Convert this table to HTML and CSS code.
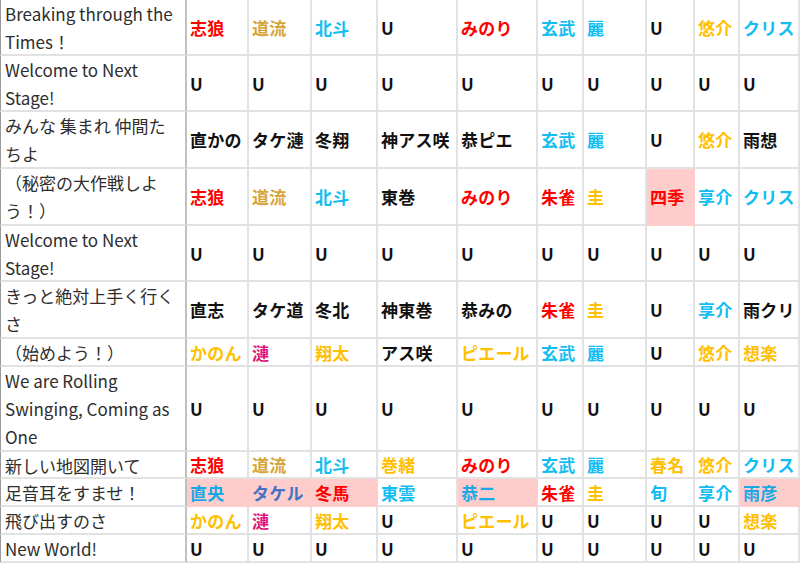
FILE: index.html
```html
<!DOCTYPE html>
<html lang="ja">
<head>
<meta charset="utf-8">
<title>Breaking through the Times</title>
<link rel="stylesheet" href="styles.css">
</head>
<body>
<div class="sheet">
  <div class="c lyric">Breaking through the Times！</div>
  <div class="c n red">志狼</div><div class="c n gr">道流</div><div class="c n cy">北斗</div><div class="c n">U</div><div class="c n red">みのり</div><div class="c n cy">玄武</div><div class="c n cy">麗</div><div class="c n">U</div><div class="c n gd">悠介</div><div class="c n cy">クリス</div>

  <div class="c lyric">Welcome to Next Stage!</div>
  <div class="c n">U</div><div class="c n">U</div><div class="c n">U</div><div class="c n">U</div><div class="c n">U</div><div class="c n">U</div><div class="c n">U</div><div class="c n">U</div><div class="c n">U</div><div class="c n">U</div>

  <div class="c lyric">みんな 集まれ 仲間たちよ</div>
  <div class="c n">直かの</div><div class="c n">タケ漣</div><div class="c n">冬翔</div><div class="c n">神アス咲</div><div class="c n">恭ピエ</div><div class="c n cy">玄武</div><div class="c n cy">麗</div><div class="c n">U</div><div class="c n gd">悠介</div><div class="c n">雨想</div>

  <div class="c lyric">（秘密の大作戦しよう！）</div>
  <div class="c n red">志狼</div><div class="c n gr">道流</div><div class="c n cy">北斗</div><div class="c n">東巻</div><div class="c n red">みのり</div><div class="c n red">朱雀</div><div class="c n gd">圭</div><div class="c n red pink">四季</div><div class="c n cy">享介</div><div class="c n cy">クリス</div>

  <div class="c lyric">Welcome to Next Stage!</div>
  <div class="c n">U</div><div class="c n">U</div><div class="c n">U</div><div class="c n">U</div><div class="c n">U</div><div class="c n">U</div><div class="c n">U</div><div class="c n">U</div><div class="c n">U</div><div class="c n">U</div>

  <div class="c lyric">きっと絶対上手く行くさ</div>
  <div class="c n">直志</div><div class="c n">タケ道</div><div class="c n">冬北</div><div class="c n">神東巻</div><div class="c n">恭みの</div><div class="c n red">朱雀</div><div class="c n gd">圭</div><div class="c n">U</div><div class="c n cy">享介</div><div class="c n">雨クリ</div>

  <div class="c lyric">（始めよう！）</div>
  <div class="c n gd">かのん</div><div class="c n mg">漣</div><div class="c n gd">翔太</div><div class="c n">アス咲</div><div class="c n gd">ピエール</div><div class="c n cy">玄武</div><div class="c n cy">麗</div><div class="c n">U</div><div class="c n gd">悠介</div><div class="c n gd">想楽</div>

  <div class="c lyric">We are Rolling Swinging, Coming as One</div>
  <div class="c n">U</div><div class="c n">U</div><div class="c n">U</div><div class="c n">U</div><div class="c n">U</div><div class="c n">U</div><div class="c n">U</div><div class="c n">U</div><div class="c n">U</div><div class="c n">U</div>

  <div class="c lyric">新しい地図開いて</div>
  <div class="c n red">志狼</div><div class="c n gr">道流</div><div class="c n cy">北斗</div><div class="c n gd">巻緒</div><div class="c n red">みのり</div><div class="c n cy">玄武</div><div class="c n cy">麗</div><div class="c n gd">春名</div><div class="c n gd">悠介</div><div class="c n cy">クリス</div>

  <div class="c lyric">足音耳をすませ！</div>
  <div class="c n cb pink">直央</div><div class="c n bl pink">タケル</div><div class="c n red pink">冬馬</div><div class="c n cy">東雲</div><div class="c n cb pink">恭二</div><div class="c n red">朱雀</div><div class="c n gd">圭</div><div class="c n cy">旬</div><div class="c n cy">享介</div><div class="c n cb pink">雨彦</div>

  <div class="c lyric">飛び出すのさ</div>
  <div class="c n gd">かのん</div><div class="c n mg">漣</div><div class="c n gd">翔太</div><div class="c n">U</div><div class="c n gd">ピエール</div><div class="c n">U</div><div class="c n">U</div><div class="c n">U</div><div class="c n">U</div><div class="c n gd">想楽</div>

  <div class="c lyric">New World!</div>
  <div class="c n">U</div><div class="c n">U</div><div class="c n">U</div><div class="c n">U</div><div class="c n">U</div><div class="c n">U</div><div class="c n">U</div><div class="c n">U</div><div class="c n">U</div><div class="c n">U</div>
</div>
</body>
</html>
```

FILE: styles.css
```css
html, body {
  margin: 0;
  padding: 0;
  background: #ffffff;
  overflow: hidden;
}

.sheet {
  display: grid;
  width: 800px;
  grid-template-columns: 187px 62px 63px 66px 80px 80px 46px 63px 48px 45px 60px;
  grid-template-rows: 56px 56px 57px 57px 56px 57px 28px 85px 27px 28px 28px 28px;
  font-family: "Noto Sans CJK JP", "Noto Sans", sans-serif;
}

.c {
  box-sizing: border-box;
  border-right: 2px solid #e2e2e2;
  border-bottom: 2px solid #e2e2e2;
  overflow: hidden;
  white-space: nowrap;
}

.lyric {
  border-left: 1px solid #9a9a9a;
  border-right: 2px solid #c0c0c0;
  padding: 0 5px 0 4px;
  font-size: 17px;
  line-height: 28px;
  color: #2e2e2e;
  white-space: normal;
}

.n {
  display: flex;
  align-items: center;
  padding-left: 3px;
  font-size: 17px;
  font-weight: 700;
  letter-spacing: 0.2px;
  color: #111111;
}

.red { color: #ff0000; }
.gr  { color: #d6a53a; }
.cy  { color: #12bdf2; }
.gd  { color: #ffc000; }
.mg  { color: #e0157b; }
.bl  { color: #4472c4; }
.cb  { color: #1aa8e8; }

.pink {
  background: #ffcccc;
  border-right-color: #ffcccc;
  border-bottom-color: #ffcccc;
}
```
